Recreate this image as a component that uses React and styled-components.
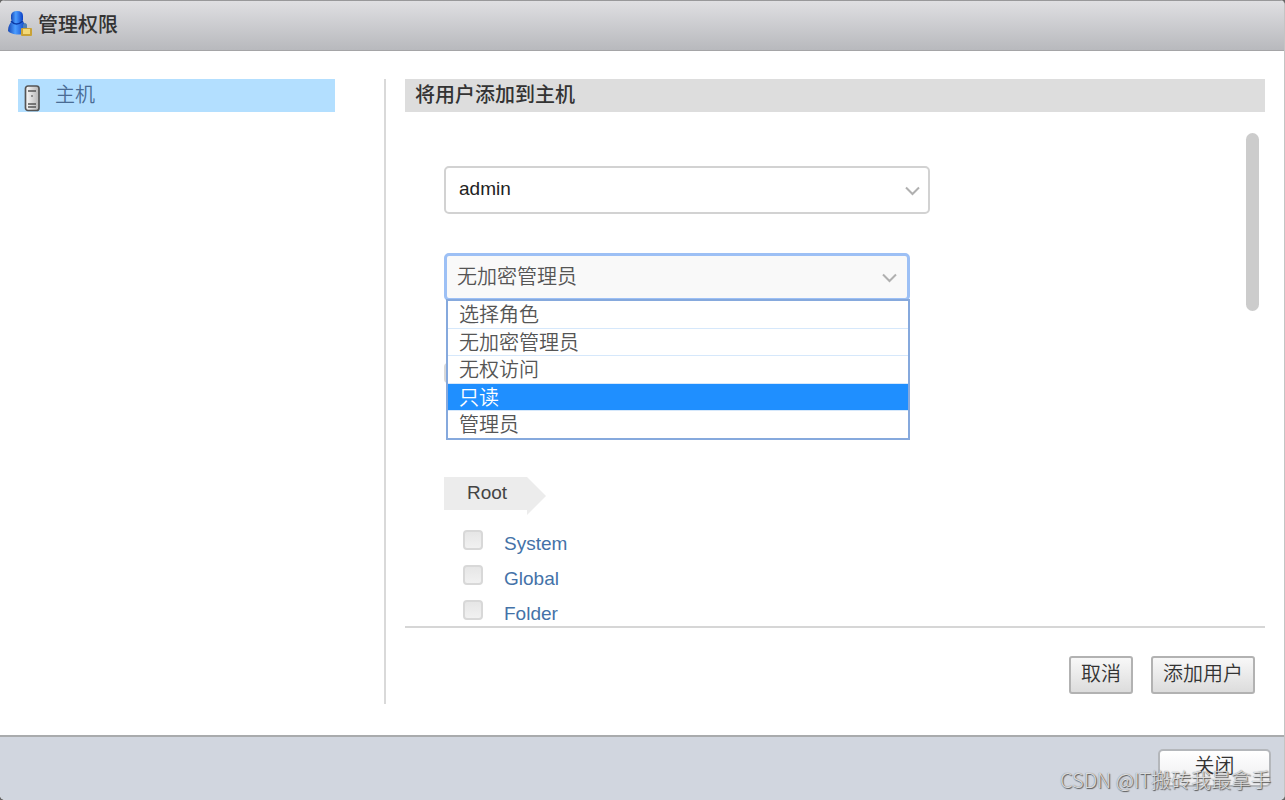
import { useState } from 'react';
import styled, { createGlobalStyle, css } from 'styled-components';

const GlobalStyle = createGlobalStyle`
  * {
    box-sizing: border-box;
  }

  body {
    margin: 0;
    background-color: #666;
    font-family: 'Liberation Sans', 'Noto Sans CJK SC', sans-serif;
    font-size: 19px;
    line-height: 28px;
    color: #444;
  }

  button,
  select {
    font: inherit;
  }
`;

const cjkText = css`
  font-family: 'Noto Sans CJK SC', sans-serif;
  font-size: 20px;
  font-weight: 350;
`;

const Window = styled.div`
  position: relative;
  display: flex;
  flex-direction: column;
  min-height: 100vh;
  border-right: 1px solid #c4c4c4;
  border-radius: 5px;
  background-color: #fff;
  overflow: hidden;
`;

const TitleBar = styled.header`
  display: flex;
  align-items: center;
  gap: 6px;
  height: 51px;
  padding: 0 8px 4px;
  border-top: 1px solid #98989a;
  border-bottom: 1px solid #a5a5a7;
  background: linear-gradient(#dfdfe2, #b8b9bd);

  h1 {
    ${cjkText}
    margin: 0;
    font-weight: 500;
    color: #333;
  }
`;

const Body = styled.div`
  display: flex;
  flex: 1;
  gap: 19px;
  padding: 28px 19px 31px 18px;
`;

const Sidebar = styled.nav`
  flex: 0 0 368px;
  padding-right: 49px;
  border-right: 2px solid #d9d9d9;
`;

const HostLink = styled.a`
  ${cjkText}
  display: flex;
  gap: 14px;
  height: 33px;
  padding-left: 6px;
  background-color: #b3dfff;
  line-height: 30px;
  color: #4a6c94;
  text-decoration: none;

  svg {
    margin-top: 6px;
  }
`;

const Content = styled.main`
  display: flex;
  flex: 1;
  flex-direction: column;
  min-width: 0;

  h2 {
    ${cjkText}
    margin: 0;
    padding: 0 10px;
    height: 33px;
    line-height: 30px;
    background-color: #ddd;
    font-weight: 500;
    color: #333;
  }
`;

const ScrollArea = styled.div`
  display: flex;
  flex: 1;
  justify-content: space-between;
  border-bottom: 2px solid #d6d6d6;
`;

const Thumb = styled.div`
  width: 13px;
  height: 178px;
  margin: 21px 6px 0 0;
  border-radius: 7px;
  background-color: #ccc;
`;

const Form = styled.form`
  display: flex;
  flex-direction: column;
  align-items: flex-start;
  padding: 54px 0 0 39px;
`;

const Field = styled.div`
  position: relative;
  width: ${({ $width }) => $width}px;
  margin-bottom: ${({ $gap }) => $gap}px;

  select {
    width: 100%;
    height: 48px;
    padding: 0 13px 2px;
    border: 2px solid #d2d2d2;
    border-radius: 5px;
    background-color: #fff;
    color: #222;
    appearance: none;
    outline: none;
  }

  > svg {
    position: absolute;
    top: 20px;
    right: 10px;
    pointer-events: none;
  }
`;

const RoleField = styled(Field)`
  select {
    ${cjkText}
    padding: 0 10px 3px;
    border: 3px solid #9dc0f5;
    background-color: #f9f9f9;
    color: #555;
  }

  > svg {
    right: 13px;
  }
`;

const Options = styled.ul`
  ${cjkText}
  position: absolute;
  top: 46px;
  left: 2px;
  right: 0;
  z-index: 1;
  display: flex;
  flex-direction: column;
  height: 141px;
  margin: 0;
  padding: 0;
  border: 2px solid #86a9dd;
  background-color: #fff;
  line-height: 26px;
  list-style: none;
`;

const Option = styled.li`
  flex: 1;
  padding: 0 11px;
  border-bottom: 1px solid #d6e8fb;
  background-color: ${({ $active }) => ($active ? '#1f8fff' : '#fff')};
  color: ${({ $active }) => ($active ? '#fff' : '#555')};
  cursor: pointer;

  &:last-child {
    border-bottom: 0;
  }
`;

const Checkbox = styled.input.attrs({ type: 'checkbox' })`
  flex: none;
  width: 20px;
  height: 20px;
  margin: 0;
  border: 2px solid #d8d8d8;
  border-radius: 4px;
  background: linear-gradient(#e6e6e6, #f1f1f1);
  appearance: none;

  &:checked {
    background: #4a78b0;
  }
`;

const Propagate = styled.div`
  display: flex;
  height: 20px;
  margin-bottom: 94px;
`;

const RootTag = styled.div`
  display: flex;
  height: 38px;
  margin-bottom: 15px;
  line-height: 31px;

  span {
    height: 33px;
    padding: 0 20px 0 23px;
    background-color: #ececec;
  }

  &::after {
    content: '';
    border: 19px solid transparent;
    border-right: 0;
    border-left-color: #ececec;
  }
`;

const Privilege = styled.label`
  display: flex;
  gap: 21px;
  height: 35px;
  padding-left: 19px;
  color: #4472a8;

  &:last-child {
    height: 26px;
  }
`;

const Actions = styled.div`
  display: flex;
  justify-content: flex-end;
  gap: 18px;
  padding: 28px 10px 10px;
`;

const Button = styled.button`
  ${cjkText}
  height: 38px;
  padding: 0 10px 4px;
  border: 2px solid #b2b2b2;
  border-radius: 3px;
  background: linear-gradient(#f8f8f8, #dcdcdc);
  line-height: 28px;
  color: #333;
`;

const Footer = styled.footer`
  display: flex;
  justify-content: flex-end;
  height: 65px;
  padding: 12px 13px;
  border-top: 2px solid #a9abad;
  background-color: #d1d6df;
`;

const CloseButton = styled(Button)`
  width: 113px;
  padding-bottom: 6px;
  border-color: #b4b7bb;
  border-radius: 5px;
  background: linear-gradient(#fff, #ececee);
`;

const Watermark = styled.div`
  position: absolute;
  right: 13px;
  bottom: 6px;
  font-family: 'Noto Sans CJK SC', sans-serif;
  font-size: 20px;
  font-weight: 300;
  color: rgba(255, 255, 255, 0.75);
  text-shadow: 1px 1px 1px #555, 0 0 1px #666;
  pointer-events: none;
`;

const UserLockIcon = () => (
  <svg width='24' height='26' viewBox='0 0 24 26' aria-hidden='true'>
    <defs>
      <linearGradient id='user-blue' x1='0' y1='0' x2='1' y2='0'>
        <stop offset='0' stopColor='#1646b4' />
        <stop offset='.4' stopColor='#4b9dff' />
        <stop offset='1' stopColor='#0a3fc4' />
      </linearGradient>
    </defs>
    <path d='M4 10C2 12 0 15 0 20C3 24 14 25 18 21L17 14Q16 11 14 10Z' fill='url(#user-blue)' />
    <path d='M3 4Q4 0 9 0Q15 0 15 5V9Q13 13 9 13Q4 12 3 8Z' fill='url(#user-blue)' />
    <path d='M3 10Q8 16 15 10' fill='none' stroke='#0c3aa6' strokeWidth='1.5' />
    <path d='M16 19V14Q17 12 18 14V17' fill='none' stroke='#4f80b5' strokeWidth='2' />
    <rect x='13' y='17' width='11' height='8' rx='1' fill='#c9a236' />
    <path d='M15 18H22V23H15Z' fill='#f3d978' />
  </svg>
);

const HostIcon = () => (
  <svg width='17' height='27' viewBox='0 0 17 27' aria-hidden='true'>
    <defs>
      <linearGradient id='host-metal'>
        <stop offset='0' stopColor='#fafafa' />
        <stop offset='1' stopColor='#b5b5b5' />
      </linearGradient>
    </defs>
    <rect x='1.5' y='1' width='13.5' height='24.5' rx='2.5' fill='url(#host-metal)' stroke='#555' strokeWidth='1.7' />
    <path d='M4 6H12M4 19H12M4 22H12' stroke='#555' strokeWidth='1.3' />
    <circle cx='8' cy='11' r='1' fill='#777' />
  </svg>
);

const Chevron = () => (
  <svg width='15' height='10' viewBox='0 0 15 10' aria-hidden='true'>
    <path d='M1 1.5L7.5 8L14 1.5' fill='none' stroke='#b0b0b0' strokeWidth='2' />
  </svg>
);

const roles = ['选择角色', '无加密管理员', '无权访问', '只读', '管理员'];
const privileges = ['System', 'Global', 'Folder'];

const App = () => {
  const [role, setRole] = useState('无加密管理员');
  const [active, setActive] = useState('只读');

  return (
    <>
      <GlobalStyle />
      <Window>
        <TitleBar>
          <UserLockIcon />
          <h1>管理权限</h1>
        </TitleBar>
        <Body>
          <Sidebar>
            <HostLink href='#host'>
              <HostIcon />
              主机
            </HostLink>
          </Sidebar>
          <Content>
            <h2>将用户添加到主机</h2>
            <ScrollArea>
              <Form>
                <Field $width={486} $gap={39}>
                  <select aria-label='用户' defaultValue='admin'>
                    <option>admin</option>
                  </select>
                  <Chevron />
                </Field>
                <RoleField $width={466} $gap={62}>
                  <select aria-label='角色' value={role} onChange={e => setRole(e.target.value)}>
                    {roles.map(name => (
                      <option key={name}>{name}</option>
                    ))}
                  </select>
                  <Chevron />
                  <Options role='listbox' aria-label='角色'>
                    {roles.map(name => (
                      <Option
                        key={name}
                        role='option'
                        aria-selected={name === role}
                        $active={name === active}
                        onMouseEnter={() => setActive(name)}
                        onClick={() => setRole(name)}
                      >
                        {name}
                      </Option>
                    ))}
                  </Options>
                </RoleField>
                <Propagate>
                  <Checkbox aria-label='传播到所有子对象' />
                </Propagate>
                <RootTag>
                  <span>Root</span>
                </RootTag>
                {privileges.map(name => (
                  <Privilege key={name}>
                    <Checkbox />
                    {name}
                  </Privilege>
                ))}
              </Form>
              <Thumb />
            </ScrollArea>
            <Actions>
              <Button type='button'>取消</Button>
              <Button type='button'>添加用户</Button>
            </Actions>
          </Content>
        </Body>
        <Footer>
          <CloseButton type='button'>关闭</CloseButton>
        </Footer>
        <Watermark>CSDN @IT搬砖我最拿手</Watermark>
      </Window>
    </>
  );
};

export default App;
